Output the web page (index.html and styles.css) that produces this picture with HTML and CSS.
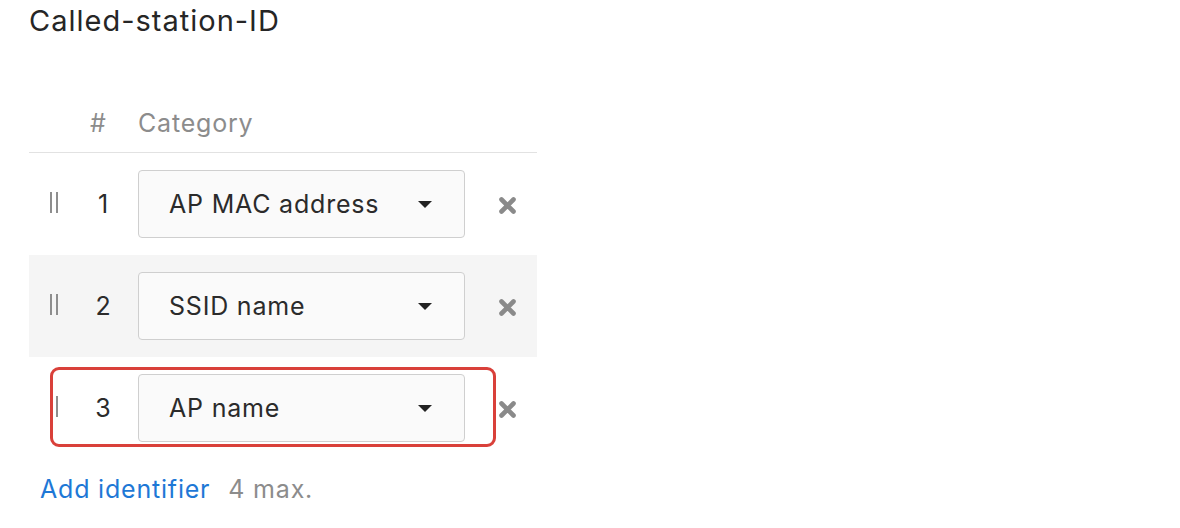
FILE: index.html
```html
<!DOCTYPE html>
<html>
<head>
<meta charset="utf-8">
<link rel="stylesheet" href="styles.css">
</head>
<body>
<div class="page">
  <h1 class="title">Called-station-ID</h1>
  <div class="table">
    <div class="head">
      <span class="col-handle"></span>
      <span class="col-num">#</span>
      <span class="col-cat">Category</span>
    </div>
    <div class="row">
      <span class="col-handle"><span class="handle"></span></span>
      <span class="col-num">1</span>
      <div class="select"><span>AP MAC address</span><span class="caret"></span></div>
      <span class="col-del"><svg width="19" height="19" viewBox="0 0 19 19"><path d="M3.5 3.5L15.5 15.5M15.5 3.5L3.5 15.5" stroke="#8a8a8a" stroke-width="4.6" stroke-linecap="round"/></svg></span>
    </div>
    <div class="row alt">
      <span class="col-handle"><span class="handle"></span></span>
      <span class="col-num">2</span>
      <div class="select"><span>SSID name</span><span class="caret"></span></div>
      <span class="col-del"><svg width="19" height="19" viewBox="0 0 19 19"><path d="M3.5 3.5L15.5 15.5M15.5 3.5L3.5 15.5" stroke="#8a8a8a" stroke-width="4.6" stroke-linecap="round"/></svg></span>
    </div>
    <div class="row last">
      <span class="col-handle"><span class="handle"></span></span>
      <span class="col-num">3</span>
      <div class="select"><span>AP name</span><span class="caret"></span></div>
      <span class="col-del"><svg width="19" height="19" viewBox="0 0 19 19"><path d="M3.5 3.5L15.5 15.5M15.5 3.5L3.5 15.5" stroke="#8a8a8a" stroke-width="4.6" stroke-linecap="round"/></svg></span>
      <div class="highlight"></div>
    </div>
  </div>
  <div class="footer">
    <a class="add">Add identifier</a>
    <span class="max">4 max.</span>
  </div>
</div>
</body>
</html>
```
FILE: styles.css
```css
* { box-sizing: border-box; }
html, body { margin: 0; padding: 0; background: #fff; }
body { font-family: Inter, "Noto Sans", sans-serif; color: #2b2b2b; }
.page { padding: 3px 0 0 29px; width: 537px; }
.title { margin: 0; font-size: 29px; font-weight: 400; line-height: 36px; color: #262626; letter-spacing: 1px; white-space: nowrap; }
.table { margin-top: 54px; width: 508px; }
.head { display: flex; align-items: center; height: 60px; border-bottom: 1px solid #e2e2e2; color: #8c8c8c; font-size: 25px; letter-spacing: 0.8px; }
.col-handle { width: 61px; flex: none; display: flex; justify-content: flex-start; padding-left: 21px; }
.col-num { width: 48px; flex: none; text-align: center; font-size: 25px; }
.head .col-num { color: #8c8c8c; padding-right: 32px; }
.row { position: relative; display: flex; align-items: center; height: 102px; }
.row.alt { background: #f5f5f5; }
.row .col-num { color: #2b2b2b; padding-right: 22px; }
.handle { width: 8px; height: 21px; border-left: 2px solid #8e8e8e; border-right: 2px solid #8e8e8e; margin-top: -4px; }
.select { width: 327px; flex: none; height: 68px; border: 1px solid #cfcfcf; border-radius: 4px; background: #fafafa; display: flex; align-items: center; justify-content: space-between; padding: 0 32px 0 30px; font-size: 25px; letter-spacing: 0.8px; color: #2b2b2b; }
.caret { width: 0; height: 0; border-left: 7px solid transparent; border-right: 7px solid transparent; border-top: 7px solid #222; }
.col-del { width: 72px; flex: none; display: flex; justify-content: flex-end; padding-right: 20px; padding-top: 2px; }
.highlight { position: absolute; left: 21px; top: 10px; width: 446px; height: 80px; border: 3px solid #d9403a; border-radius: 9px; pointer-events: none; }
.footer { padding: 15px 0 0 11px; font-size: 25px; line-height: 30px; letter-spacing: 0.8px; display: flex; gap: 18px; }
.add { color: #1e78d6; text-decoration: none; }
.max { color: #8c8c8c; }
```
